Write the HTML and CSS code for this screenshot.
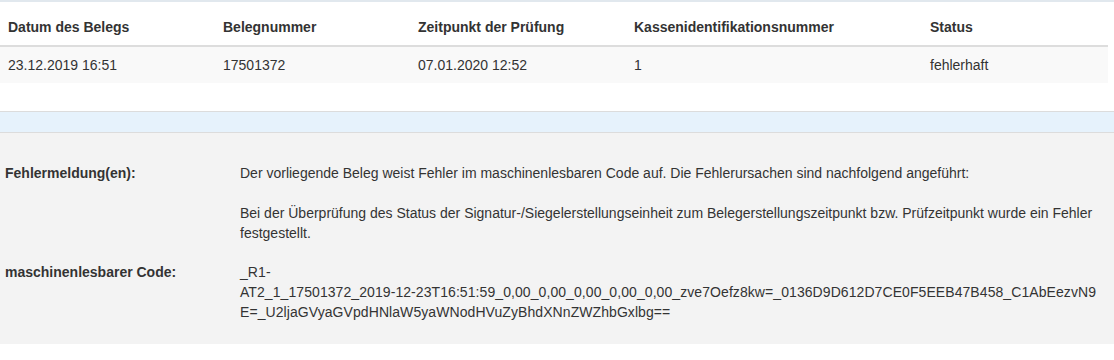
FILE: index.html
```html
<!DOCTYPE html>
<html lang="de">
<head>
    <meta charset="UTF-8">
    <title>Belegprüfung</title>
    <link rel="stylesheet" href="styles.css">
</head>
<body>
<div class="result">
    <table class="receipt">
        <thead>
        <tr>
            <th class="c1">Datum des Belegs</th>
            <th class="c2">Belegnummer</th>
            <th class="c3">Zeitpunkt der Prüfung</th>
            <th class="c4">Kassenidentifikationsnummer</th>
            <th>Status</th>
        </tr>
        </thead>
        <tbody>
        <tr>
            <td>23.12.2019 16:51</td>
            <td>17501372</td>
            <td>07.01.2020 12:52</td>
            <td>1</td>
            <td>fehlerhaft</td>
        </tr>
        </tbody>
    </table>
</div>
<div class="band"></div>
<div class="details">
    <div class="row">
        <div class="label">Fehlermeldung(en):</div>
        <div class="value">
            <p>Der vorliegende Beleg weist Fehler im maschinenlesbaren Code auf. Die Fehlerursachen sind nachfolgend angeführt:</p>
            <p>Bei der Überprüfung des Status der Signatur-/Siegelerstellungseinheit zum Belegerstellungszeitpunkt bzw. Prüfzeitpunkt wurde ein Fehler festgestellt.</p>
        </div>
    </div>
    <div class="row">
        <div class="label">maschinenlesbarer Code:</div>
        <div class="value code">_R1-<span class="rest">AT2_1_17501372_2019-12-23T16:51:59_0,00_0,00_0,00_0,00_0,00_zve7Oefz8kw=_0136D9D612D7CE0F5EEB47B458_C1AbEezvN9E=_U2ljaGVyaGVpdHNlaW5yaWNodHVuZyBhdXNnZWZhbGxlbg==</span></div>
    </div>
</div>
</body>
</html>
```

FILE: styles.css
```css
*{
    margin:0;
    padding:0;
    box-sizing: border-box;
}
body{
    font-family: "Liberation Sans", Arial, sans-serif;
    font-size: 14px;
    line-height: 20px;
    color: #333;
    background: #fff;
}
.result{
    border-top: 2px solid #e1e8ee;
    padding: 0 6px 28px 0;
}
.receipt{
    width: 100%;
    border-collapse: collapse;
}
.receipt th{
    text-align: left;
    font-weight: bold;
    padding: 15px 8px 8px;
    border-bottom: 2px solid #ddd;
}
.receipt .c1{ width: 215px; }
.receipt .c2{ width: 195px; }
.receipt .c3{ width: 216px; }
.receipt .c4{ width: 296px; }
.receipt td{
    padding: 8px;
    background: #f9f9f9;
}
.band{
    height: 22px;
    background: #e6f2fc;
    border-top: 1px solid #dcdcdc;
    border-bottom: 1px solid #dcdcdc;
}
.details{
    background: #f3f3f3;
    padding: 30px 12px 22px 5px;
    display: flex;
    flex-direction: column;
    gap: 19px;
}
.row{
    display: flex;
}
.label{
    width: 235px;
    flex-shrink: 0;
    font-weight: bold;
}
.value{
    flex: 1;
    min-width: 0;
}
.value p + p{
    margin-top: 20px;
}
.code{
    letter-spacing: 0.075px;
}
.code .rest{
    display: block;
    word-break: break-all;
}
```
